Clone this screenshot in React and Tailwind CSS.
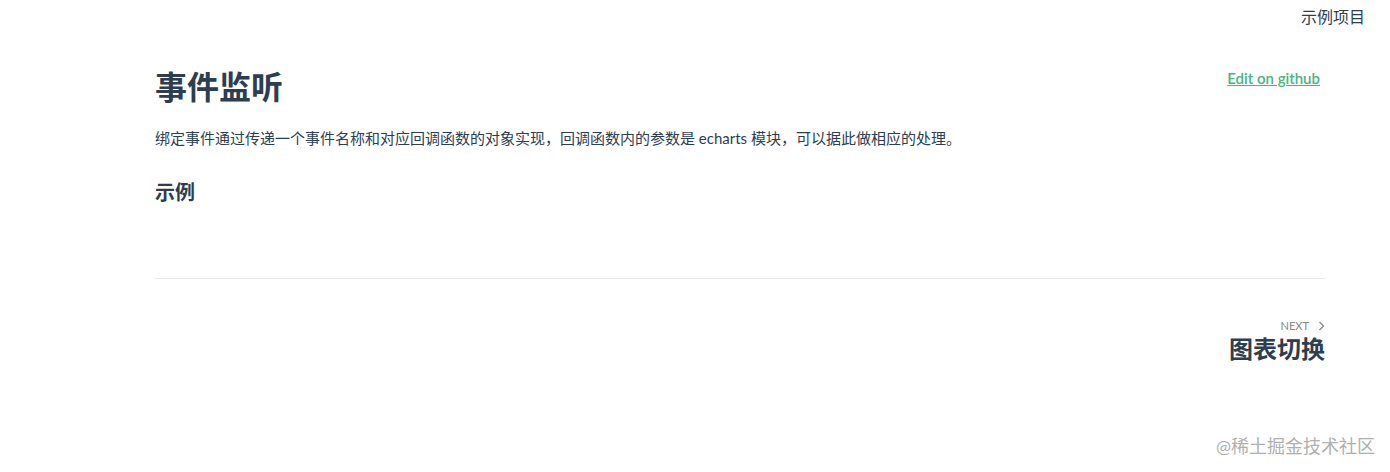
export default function App() {
  const font = { fontFamily: 'Lato, "Noto Sans CJK SC", sans-serif' };
  return (
    <div className="relative w-[1390px] h-[472px] bg-white text-[#2c3e50] overflow-hidden" style={font}>
      <div className="flex justify-end pr-[25px] pt-[5px] h-[30px]">
        <span className="text-[16px] leading-[24px]">示例项目</span>
      </div>
      <div className="mx-[155px] w-[1170px]">
        <div className="flex items-start justify-between pt-[35px]">
          <h1 className="text-[32px] font-bold leading-[44px]">事件监听</h1>
          <a className="mt-[3px] mr-[5px] text-[15px] text-[#46b583] underline font-semibold leading-[20px]">Edit on github</a>
        </div>
        <p className="mt-[17px] text-[15px] leading-[24px]">
          绑定事件通过传递一个事件名称和对应回调函数的对象实现，回调函数内的参数是 echarts 模块，可以据此做相应的处理。
        </p>
        <h3 className="mt-[28px] text-[20px] font-bold leading-[28px]">示例</h3>
        <div className="mt-[72px] border-t border-[#eaecef]"></div>
        <div className="flex flex-col items-end pt-[40px]">
          <div className="flex items-center gap-[9px] text-[11px] text-[#888] leading-[14px]">
            <span>NEXT</span>
            <svg width="7" height="10" viewBox="0 0 7 10" fill="none" stroke="#888" strokeWidth="1.3">
              <path d="M1.5 1 L5.5 5 L1.5 9" />
            </svg>
          </div>
          <div className="text-[24px] font-bold leading-[32px]">图表切换</div>
        </div>
      </div>
      <div className="absolute right-[15px] bottom-[14px] text-[18px] text-[#b0b0b0] leading-[24px]">@稀土掘金技术社区</div>
    </div>
  );
}
